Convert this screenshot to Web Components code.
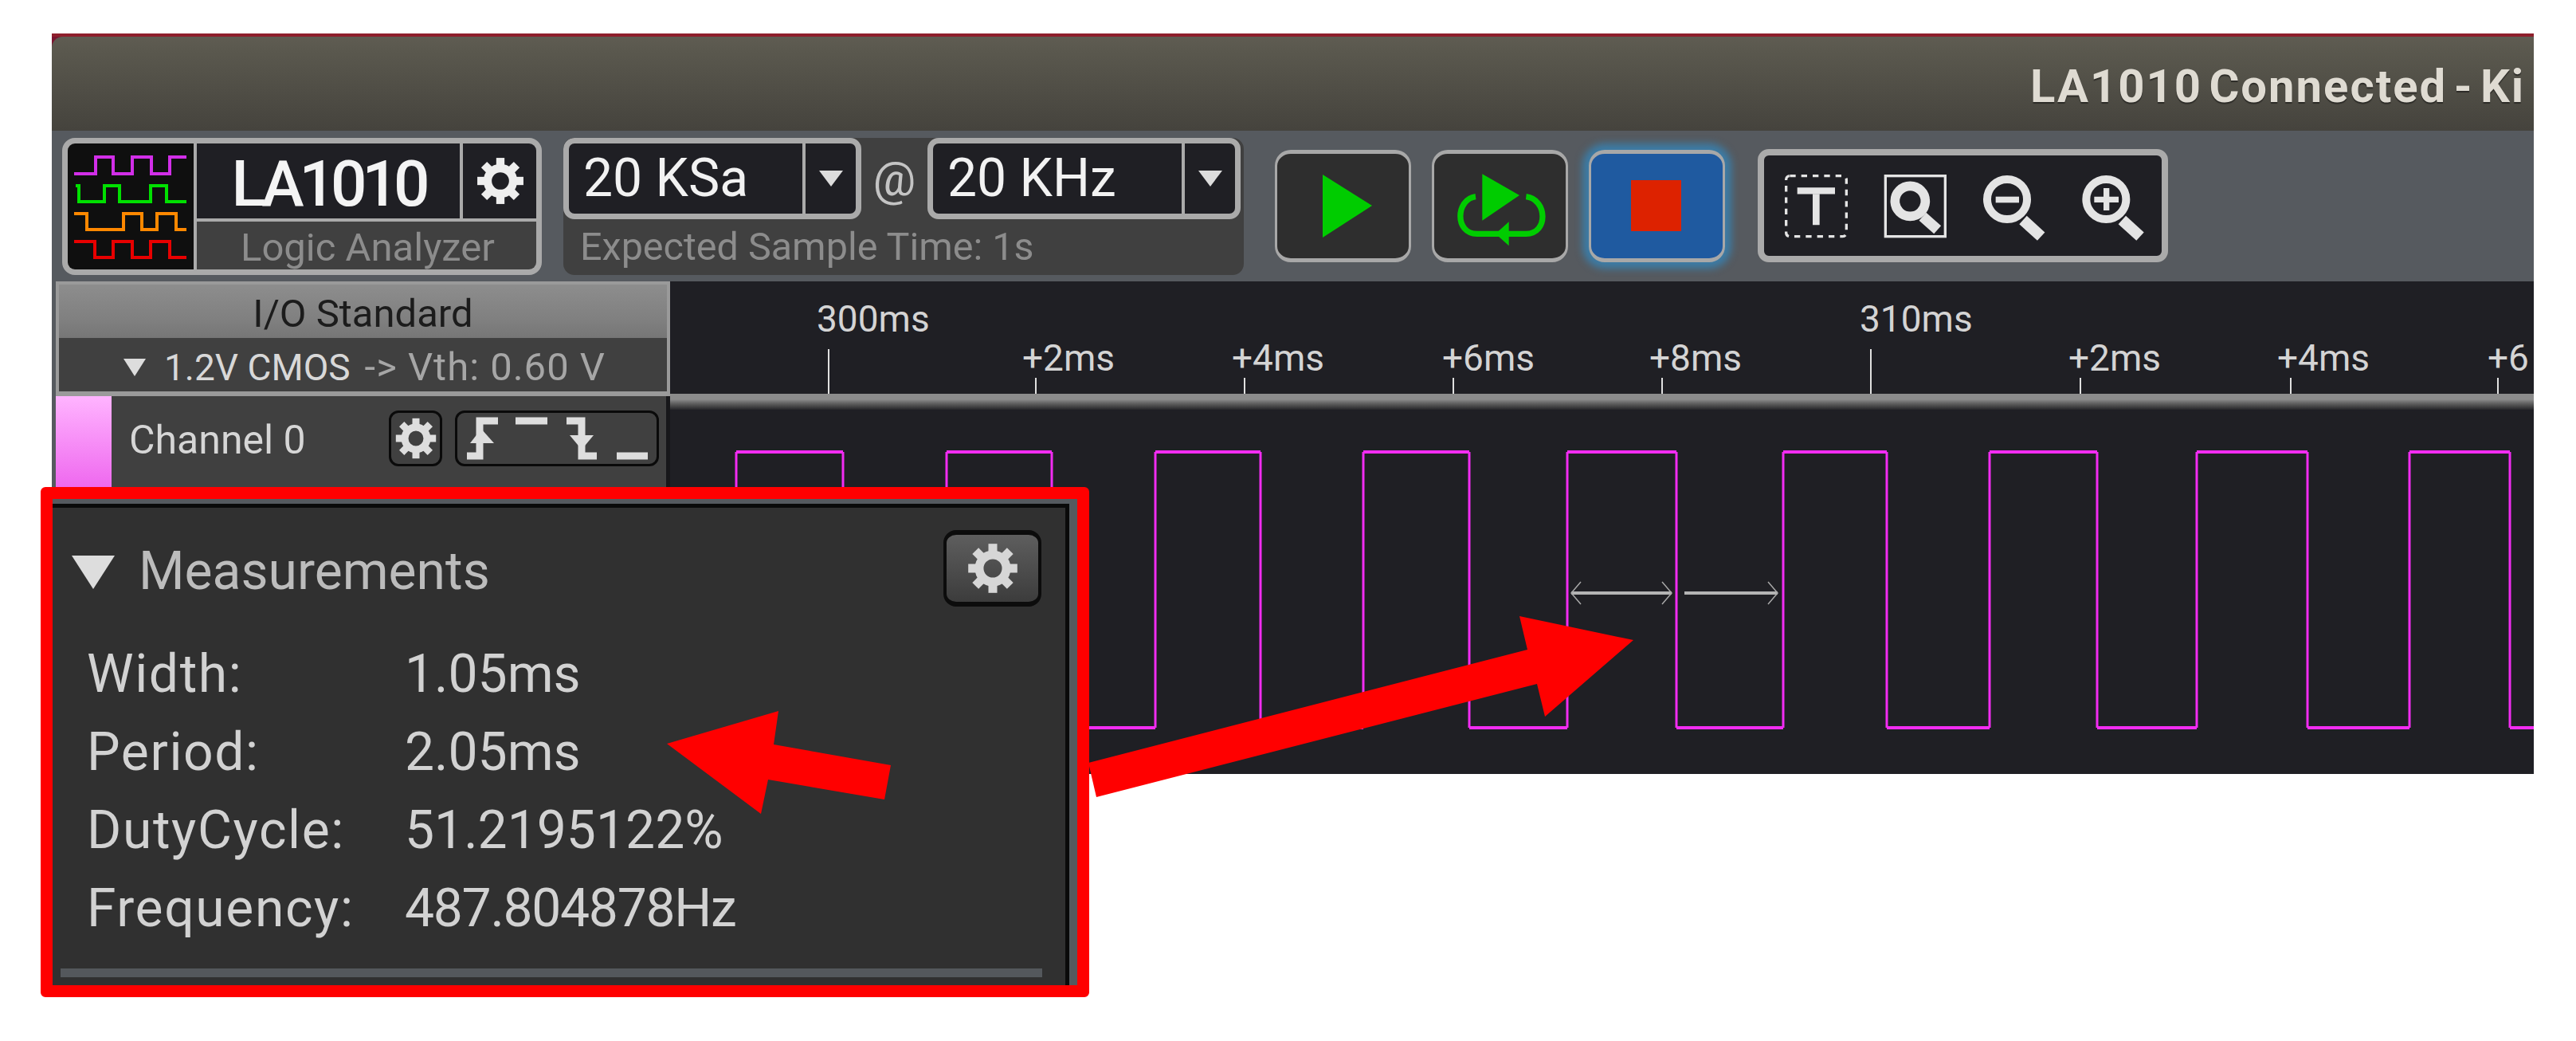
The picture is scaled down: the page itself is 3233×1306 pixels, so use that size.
<!DOCTYPE html>
<html>
<head>
<meta charset="utf-8">
<title>LA1010</title>
<style>
  html, body { margin: 0; background: #fff; }
  body { position: relative; width: 3233px; height: 1306px; overflow: hidden; font-family: Roboto, "Liberation Sans", sans-serif; }
</style>
</head>
<body>
<la-window>
  <title-bar>LA1010 Connected - Ki</title-bar>
  <tool-bar></tool-bar>
  <capture-view></capture-view>
</la-window>
<measure-panel></measure-panel>
<note-arrows></note-arrows>

<script>
// gear drawn on a 60x60 box
function gearSvg(size, color) {
  let teeth = '';
  for (let a = 0; a < 360; a += 45) {
    teeth += `<rect x="25" y="2" width="10" height="14" transform="rotate(${a} 30 30)"/>`;
  }
  return `<svg width="${size}" height="${size}" viewBox="0 0 60 60" fill="${color}">${teeth}
    <circle cx="30" cy="30" r="15.5" fill="none" stroke="${color}" stroke-width="10"/></svg>`;
}

class TitleBar extends HTMLElement {
  constructor() {
    super();
    this.attachShadow({mode: 'open'});
    this.shadowRoot.innerHTML = `<style>
      :host {
        display: flex; height: 118px; box-sizing: border-box; padding: 32px 0 0 2483px;
        background: linear-gradient(#5f5c52, #5a584e 15%, #45433d);
        border-radius: 14px 0 0 0; overflow: hidden; white-space: nowrap;
        font: 700 58px/60px Roboto, sans-serif; letter-spacing: 2px; word-spacing: -8px; color: #dfdbd2; text-shadow: 0 2px 1px #2c2b27;
      }
    </style><slot></slot>`;
  }
}
customElements.define('title-bar', TitleBar);

class DeviceBox extends HTMLElement {
  constructor() {
    super();
    this.attachShadow({mode: 'open'});
    const line = (c, pts) => `<polyline fill="none" stroke="${c}" stroke-width="4" points="${pts}"/>`;
    this.shadowRoot.innerHTML = `<style>
      :host {
        display: grid; grid-template-columns: 158px 330px 94px; grid-template-rows: 94px 60px; gap: 4px;
        width: 602px; height: 172px; box-sizing: border-box; border: 7px solid #aaa; border-radius: 16px;
        background: #aaa; overflow: hidden; flex: none;
      }
      .logo { grid-row: 1 / 3; background: #0f0f0f; }
      .name { background: #1f1f24; color: #f4f4f4; font: 500 80px/86px Roboto, sans-serif; letter-spacing: -6px; text-align: center; box-sizing: border-box; height: 94px; padding-top: 8px; }
      .gear { background: #1f1f24; display: flex; align-items: center; justify-content: center; }
      .sub { grid-column: 2 / 4; background: #404040; color: #8c8c8c; font: 49px/52px Roboto, sans-serif; padding: 7px 0 0 55px; box-sizing: border-box; white-space: nowrap; height: 60px; }
    </style>
    <svg class="logo" width="158" height="158" viewBox="0 0 158 158">
      ${line('#d22ee8', '8,38 35,38 35,17 57,17 57,38 81,38 81,17 105,17 105,38 128,38 128,17 149,17')}
      ${line('#00e000', '10,53 14,53 14,73 46,73 46,53 65,53 65,73 104,73 104,53 124,53 124,73 149,73')}
      ${line('#ff8800', '8,88 24,88 24,108 70,108 70,88 93,88 93,108 112,108 112,88 136,88 136,108 149,108')}
      ${line('#e80000', '8,123 34,123 34,143 57,143 57,123 81,123 81,143 104,143 104,123 128,123 128,143 149,143')}
    </svg>
    <div class="name">LA1010</div>
    <div class="gear">${gearSvg(62, '#eee')}</div>
    <div class="sub">Logic Analyzer</div>`;
  }
}
customElements.define('device-box', DeviceBox);

class RateSelect extends HTMLElement {
  constructor() {
    super();
    this.attachShadow({mode: 'open'});
    this.shadowRoot.innerHTML = `<style>
      :host {
        display: flex; height: 102px; box-sizing: border-box; border: 7px solid #aaa; border-radius: 14px;
        background: #1f1f24; color: #f2f2f2; font: 66px/88px Roboto, sans-serif; overflow: hidden;
      }
      .val { flex: 1; padding-left: 18px; white-space: nowrap; }
      .drop { width: 63px; border-left: 4px solid #aaa; display: flex; align-items: center; justify-content: center; }
      .drop i { border: 15px solid transparent; border-top: 20px solid #ddd; border-bottom: 0; }
    </style>
    <div class="val"><slot></slot></div><div class="drop"><i></i></div>`;
  }
}
customElements.define('rate-select', RateSelect);

class RatePanel extends HTMLElement {
  constructor() {
    super();
    this.attachShadow({mode: 'open'});
    this.shadowRoot.innerHTML = `<style>
      :host { display: block; width: 854px; height: 172px; background: #404040; border-radius: 14px; flex: none; overflow: hidden; }
      .row { display: flex; align-items: flex-start; }
      rate-select:first-child { width: 374px; }
      rate-select:last-child { width: 393px; }
      .at { width: 83px; text-align: center; color: #c4c4c4; font: 60px/104px Roboto, sans-serif; }
      .hint { color: #8c8c8c; font: 48.5px/66px Roboto, sans-serif; padding-left: 21px; white-space: nowrap; }
    </style>
    <div class="row"><rate-select>20 KSa</rate-select><div class="at">@</div><rate-select>20 KHz</rate-select></div>
    <div class="hint">Expected Sample Time: 1s</div>`;
  }
}
customElements.define('rate-panel', RatePanel);

class RunButton extends HTMLElement {
  constructor() {
    super();
    this.attachShadow({mode: 'open'});
    this.shadowRoot.innerHTML = `<style>
      :host {
        display: block; width: 171px; height: 141px; box-sizing: border-box; flex: none;
        border: 3px solid #a8a8a8; border-top-width: 5px; border-bottom-width: 5px; border-radius: 20px;
        background: #2e2e2e;
      }
      :host([active]) { background: #1f5aa0; box-shadow: 0 0 10px 8px #3c7ca6; }
      svg { display: block; }
    </style>
    <svg width="165" height="131" viewBox="${this.getAttribute('kind') === 'loop' ? '24 39 495 393' : '0 0 165 131'}"></svg>`;
    this.shadowRoot.querySelector('svg').innerHTML = this.getIcon();
  }
  getIcon() {
    const kind = this.getAttribute('kind');
    if (kind === 'play') {
      return `<polygon fill="#00cc00" points="57,26 119,65 57,105"/>`;
    }
    if (kind === 'loop') {
      // coordinates read off a 3x crop of the button
      return `<polygon fill="#00cc00" points="205,115 345,195 205,290"/>
        <path d="M180,200 C105,210 100,340 185,340 H370 C455,340 450,210 370,200" fill="none" stroke="#00cc00" stroke-width="22"/>
        <polygon fill="#00cc00" points="305,295 305,385 255,340"/>`;
    }
    return `<rect fill="#dd2200" x="50" y="33" width="63" height="64"/>`;
  }
}
customElements.define('run-button', RunButton);

class ZoomTools extends HTMLElement {
  constructor() {
    super();
    this.attachShadow({mode: 'open'});
    const c = '#e4e4e4';
    const glass = (cx) => `<circle cx="${cx}" cy="210" r="75" fill="none" stroke="${c}" stroke-width="30"/>
      <path d="M${cx + 60},288 L${cx + 128},350" stroke="${c}" stroke-width="42" fill="none"/>`;
    this.shadowRoot.innerHTML = `<style>
      :host {
        display: block; width: 515px; height: 142px; box-sizing: border-box; flex: none;
        background: #1f1f24; border: 8px solid #aaa; border-radius: 14px; overflow: hidden;
      }
      svg { display: block; margin: -15px 0 0 -12px; }
    </style>
    <svg width="530" height="155" viewBox="0 0 1568 465">
      <rect x="108" y="122" width="227" height="228" rx="14" fill="none" stroke="${c}" stroke-width="10" stroke-dasharray="22 21"/>
      <path d="M150,178 H292" stroke="${c}" stroke-width="25"/>
      <path d="M221,190 V307" stroke="${c}" stroke-width="26"/>
      <rect x="482" y="122" width="225" height="228" fill="none" stroke="${c}" stroke-width="10"/>
      <circle cx="575" cy="217" r="57" fill="none" stroke="${c}" stroke-width="35"/>
      <path d="M622,275 L678,325" stroke="${c}" stroke-width="40"/>
      ${glass(940)}
      <rect x="897" y="200" width="88" height="23" fill="${c}"/>
      ${glass(1313)}
      <path d="M1268,211 H1360 M1314,168 V252" stroke="${c}" stroke-width="22"/>
    </svg>`;
  }
}
customElements.define('zoom-tools', ZoomTools);

class ToolBar extends HTMLElement {
  constructor() {
    super();
    this.attachShadow({mode: 'open'});
    this.shadowRoot.innerHTML = `<style>
      :host { display: flex; align-items: flex-start; height: 189px; box-sizing: border-box; padding: 9px 0 0 13px; background: #565a5f; }
      rate-panel { margin-left: 27px; }
      .btns { display: flex; gap: 26px; margin: 15px 41px 0 39px; }
      zoom-tools { margin-top: 14px; }
    </style>
    <device-box></device-box>
    <rate-panel></rate-panel>
    <div class="btns">
      <run-button kind="play"></run-button>
      <run-button kind="loop"></run-button>
      <run-button kind="stop" active></run-button>
    </div>
    <zoom-tools></zoom-tools>`;
  }
}
customElements.define('tool-bar', ToolBar);

class IoStandard extends HTMLElement {
  constructor() {
    super();
    this.attachShadow({mode: 'open'});
    this.shadowRoot.innerHTML = `<style>
      :host { display: block; height: 144px; box-sizing: border-box; border: 4px solid #9a9a9a; border-bottom-width: 6px; background: #404040; }
      .head {
        height: 67px; box-sizing: border-box; padding-top: 8px; background: linear-gradient(#8d8d8d, #808080 65%, #767676); color: #1c1c1c;
        font: 49px/58px Roboto, sans-serif; text-align: center;
      }
      .std { display: flex; align-items: center; height: 67px; box-sizing: border-box; padding-top: 7px; color: #d8d8d8; font: 46px/58px Roboto, sans-serif; white-space: nowrap; }
      i { border: 14px solid transparent; border-top: 22px solid #ddd; border-bottom: 0; margin: 0 23px 0 81px; }
      span { color: #a6a6a6; margin-left: 18px; font-size: 49px; letter-spacing: 1px; }
    </style>
    <div class="head">I/O Standard</div>
    <div class="std"><i></i>1.2V CMOS<span>-&gt; Vth: 0.60 V</span></div>`;
  }
}
customElements.define('io-standard', IoStandard);

class ChannelRow extends HTMLElement {
  constructor() {
    super();
    this.attachShadow({mode: 'open'});
    this.shadowRoot.innerHTML = `<style>
      :host { display: flex; flex: 1; background: #404040; border-right: 5px solid #17171a; align-items: flex-start; }
      .swatch { width: 70px; height: 474px; background: linear-gradient(#ffb4ff, #ee66ee 118px); flex: none; }
      .name { width: 348px; padding-left: 22px; box-sizing: border-box; color: #d6d6d6; font: 50px/60px Roboto, sans-serif; margin-top: 25px; white-space: nowrap; }
      .box { border: 3px solid #0a0a0a; border-radius: 12px; height: 70px; box-sizing: border-box; margin-top: 18px; display: flex; align-items: center; justify-content: center; }
      .g { width: 67px; }
      .e { width: 256px; margin-left: 16px; }
    </style>
    <div class="swatch"></div>
    <div class="name">Channel 0</div>
    <div class="box g">${gearSvg(54, '#dedede')}</div>
    <div class="box e">
      <svg width="250" height="64" viewBox="0 0 250 64" fill="none" stroke="#dedede" stroke-width="9">
        <path d="M12,54 H28 V10 H51"/><polygon fill="#dedede" stroke="none" points="30,20 46,38 16,38"/>
        <path d="M73,10 H113"/>
        <path d="M137,10 H156 V54 H175"/><polygon fill="#dedede" stroke="none" points="156,46 171,28 141,28"/>
        <path d="M200,54 H239"/>
      </svg>
    </div>`;
  }
}
customElements.define('channel-row', ChannelRow);

class TimeRuler extends HTMLElement {
  constructor() {
    super();
    this.attachShadow({mode: 'open'});
    // x positions are relative to the start of the ruler (841)
    const ticks = [198, 458, 720, 982, 1244, 1506, 1769, 2033, 2293];
    const majors = [198, 1506];
    const labels = [
      ['300ms', 184, 22], ['+2ms', 442, 71], ['+4ms', 705, 71], ['+6ms', 969, 71], ['+8ms', 1229, 71],
      ['310ms', 1493, 22], ['+2ms', 1755, 71], ['+4ms', 2017, 71], ['+6', 2281, 71]
    ];
    const tickHtml = ticks.map(x => {
      const h = majors.includes(x) ? 56 : 20;
      return `<b style="left:${x}px;height:${h}px"></b>`;
    }).join('');
    const labelHtml = labels.map(l => `<span style="left:${l[1]}px;top:${l[2]}px">${l[0]}</span>`).join('');
    this.shadowRoot.innerHTML = `<style>
      :host { display: block; position: relative; height: 141px; background: #1f1f24; overflow: hidden; }
      b { position: absolute; bottom: 0; width: 2px; background: #e0e0e0; }
      span { position: absolute; color: #d4d4d4; font: 46px/50px Roboto, sans-serif; white-space: nowrap; }
    </style>${tickHtml}${labelHtml}`;
  }
}
customElements.define('time-ruler', TimeRuler);

class WavePlot extends HTMLElement {
  constructor() {
    super();
    this.attachShadow({mode: 'open'});
    // rising, falling, rising... absolute page x of the trace edges
    const edges = [924, 1058, 1188, 1320, 1450, 1582, 1711, 1844, 1967, 2104, 2238, 2368, 2497, 2632, 2757, 2896, 3024, 3150];
    const top = 53, bottom = 399, off = 841;
    let flats = `M0,${bottom} H${edges[0] - off}`;
    let verts = '';
    edges.forEach((e, i) => {
      const x = e - off;
      const next = i + 1 < edges.length ? edges[i + 1] - off : 2339;
      verts += `M${x},${top} V${bottom}`;
      flats += `M${x},${i % 2 ? bottom : top} H${next}`;
    });
    const ax = 1972 - off, ay = 230;
    const head = (x, d) => `M${x + d},${ay - 14} L${x},${ay} L${x + d},${ay + 14}`;
    this.shadowRoot.innerHTML = `<style>
      :host { display: block; height: 477px; background: #1f1f24; }
      .sep { height: 20px; background: linear-gradient(#8c8c8c, #8c8c8c 35%, #6a6a6a 55%, #4c4c4c 75%, #26262a); }
      svg { display: block; }
    </style>
    <div class="sep"></div>
    <svg width="2339" height="457" viewBox="0 0 2339 457" fill="none">
      <path d="${flats}" stroke="#f22cf2" stroke-width="4"/>
      <path d="${verts}" stroke="#f22cf2" stroke-width="3"/>
      <path d="M${ax},${ay} H${ax + 126} M${ax + 142},${ay} H${ax + 259}" stroke="#b4b4b4" stroke-width="4"/>
      <path d="${head(ax, 12)} ${head(ax + 126, -12)} ${head(ax + 259, -12)}" stroke="#a8a8a8" stroke-width="1.5"/>
    </svg>`;
  }
}
customElements.define('wave-plot', WavePlot);

class CaptureView extends HTMLElement {
  constructor() {
    super();
    this.attachShadow({mode: 'open'});
    this.shadowRoot.innerHTML = `<style>
      :host { display: grid; grid-template-columns: 771px 1fr; height: 618px; padding-left: 5px; background: #565a5f; }
      .left { display: flex; flex-direction: column; min-width: 0; }
      .right { min-width: 0; }
    </style>
    <div class="left"><io-standard></io-standard><channel-row></channel-row></div>
    <div class="right"><time-ruler></time-ruler><wave-plot></wave-plot></div>`;
  }
}
customElements.define('capture-view', CaptureView);

class LaWindow extends HTMLElement {
  constructor() {
    super();
    this.attachShadow({mode: 'open'});
    this.shadowRoot.innerHTML = `<style>
      :host { display: block; margin: 42px 0 0 65px; width: 3115px; overflow: hidden; border-top: 4px solid #8e1f2c; background: #7a1530; }
    </style><slot></slot>`;
  }
}
customElements.define('la-window', LaWindow);

class MeasurePanel extends HTMLElement {
  constructor() {
    super();
    this.attachShadow({mode: 'open'});
    const rows = [
      ['Width:', '1.05ms'], ['Period:', '2.05ms'], ['DutyCycle:', '51.2195122%'], ['Frequency:', '487.804878Hz']
    ];
    this.shadowRoot.innerHTML = `<style>
      :host {
        position: absolute; left: 51px; top: 611px; width: 1316px; height: 640px; box-sizing: border-box;
        border: 15px solid #f00; border-radius: 6px; background: #303030; color: #d2d2d2;
        font: 66px/80px Roboto, sans-serif; display: flex; flex-direction: column;
      }
      .edge { height: 6px; background: #555a5f; flex: none; }
      .dark { height: 5px; background: #0a0a0a; margin-right: 15px; flex: none; }
      .side { position: absolute; top: 6px; right: 0; bottom: 0; width: 15px; background: linear-gradient(90deg, #0a0a0a 5px, #555a5f 5px); }
      .head { display: flex; align-items: center; height: 96px; margin-top: 28px; padding: 0 45px 0 24px; flex: none; }
      .head i { border: 27px solid transparent; border-top: 42px solid #ddd; border-bottom: 0; margin: 10px 30px 0 0; }
      .head span { flex: 1; color: #bcbcbc; white-space: nowrap; padding-top: 8px; }
      .cfg {
        width: 123px; height: 96px; box-sizing: border-box; border: 4px solid #0c0c0c; border-top-width: 6px; border-bottom-width: 6px; border-radius: 16px;
        background: linear-gradient(#5e5e5e, #3c3c3c); display: flex; align-items: center; justify-content: center;
      }
      .rows { display: grid; grid-template-columns: 399px 1fr; grid-auto-rows: 98px; padding: 36px 0 0 43px; flex: none; }
      .rows div { white-space: nowrap; line-height: 98px; }
      .rows div:nth-child(odd) { letter-spacing: 1.6px; }
      .rows div:last-child { letter-spacing: -1.3px; }
      .bar { position: absolute; left: 10px; top: 589px; width: 1232px; height: 11px; background: #54585c; }
    </style>
    <div class="edge"></div><div class="dark"></div>
    <div class="side"></div>
    <div class="head"><i></i><span>Measurements</span><div class="cfg">${gearSvg(66, '#d6d6d6')}</div></div>
    <div class="rows">${rows.map(r => `<div>${r[0]}</div><div>${r[1]}</div>`).join('')}</div>
    <div class="bar"></div>`;
  }
}
customElements.define('measure-panel', MeasurePanel);

class NoteArrows extends HTMLElement {
  constructor() {
    super();
    this.attachShadow({mode: 'open'});
    this.shadowRoot.innerHTML = `<style>
      :host { position: absolute; left: 0; top: 0; width: 3233px; height: 1306px; pointer-events: none; }
    </style>
    <svg width="3233" height="1306" viewBox="0 0 3233 1306" fill="#f00">
      <polygon points="837,933 977,892 971,934 1118,960 1110,1003 964,978 955,1021"/>
      <polygon points="2050,803 1907,773 1917,815 1366,957 1376,1000 1929,858 1939,899"/>
    </svg>`;
  }
}
customElements.define('note-arrows', NoteArrows);
</script>
</body>
</html>
